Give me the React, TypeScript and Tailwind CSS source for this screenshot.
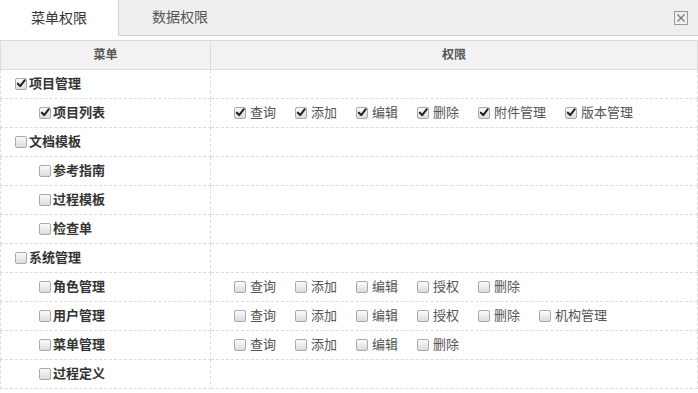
import React from 'react';

type Perm = { label: string; checked: boolean };
type Row = { label: string; level: 1 | 2; checked: boolean; perms: Perm[] };

const p = (labels: string[], checked: boolean): Perm[] => labels.map((label) => ({ label, checked }));

const rows: Row[] = [
  { label: '项目管理', level: 1, checked: true, perms: [] },
  { label: '项目列表', level: 2, checked: true, perms: p(['查询', '添加', '编辑', '删除', '附件管理', '版本管理'], true) },
  { label: '文档模板', level: 1, checked: false, perms: [] },
  { label: '参考指南', level: 2, checked: false, perms: [] },
  { label: '过程模板', level: 2, checked: false, perms: [] },
  { label: '检查单', level: 2, checked: false, perms: [] },
  { label: '系统管理', level: 1, checked: false, perms: [] },
  { label: '角色管理', level: 2, checked: false, perms: p(['查询', '添加', '编辑', '授权', '删除'], false) },
  { label: '用户管理', level: 2, checked: false, perms: p(['查询', '添加', '编辑', '授权', '删除', '机构管理'], false) },
  { label: '菜单管理', level: 2, checked: false, perms: p(['查询', '添加', '编辑', '删除'], false) },
  { label: '过程定义', level: 2, checked: false, perms: [] },
];

function Box({ checked }: { checked: boolean }) {
  return (
    <span className="relative inline-block h-[12px] w-[12px] shrink-0 rounded-[2px] border border-[#a9a9a9] bg-gradient-to-b from-[#fbfbfb] to-[#dcdcdc]">
      {checked && (
        <svg viewBox="0 0 12 12" className="absolute left-[0px] top-[-1px] h-[11px] w-[11px]">
          <path d="M2 6.2 L4.6 8.8 L9.6 2.4" fill="none" stroke="#222" strokeWidth="2.2" strokeLinecap="round" strokeLinejoin="round" />
        </svg>
      )}
    </span>
  );
}

export default function App() {
  return (
    <div className="h-[393px] w-[698px] overflow-hidden bg-white text-[13px] [font-family:'Liberation_Sans','Noto_Sans_CJK_SC',sans-serif]">
      {/* tabs */}
      <div className="relative flex h-[36px] border-b border-[#cfcfcf] bg-[#efefef]">
        <div className="flex h-[36px] w-[119px] items-center justify-center border-r border-[#cfcfcf] bg-white text-[14px] text-[#333]">
          菜单权限
        </div>
        <div className="flex h-[35px] w-[122px] items-center justify-center text-[14px] text-[#555]">数据权限</div>
        <div className="ml-auto mr-[10px] flex items-center">
          <svg viewBox="0 0 14 14" className="h-[14px] w-[14px]">
            <rect x="0.5" y="0.5" width="13" height="13" fill="none" stroke="#9a9a9a" />
            <path d="M3.5 3.5 L10.5 10.5 M10.5 3.5 L3.5 10.5" stroke="#777" strokeWidth="1.2" />
          </svg>
        </div>
      </div>

      <div className="pt-[4px]">
        <table className="w-full border-collapse">
          <thead>
            <tr className="h-[29px] bg-[#f2f2f2] text-[12px] font-bold text-[#555]">
              <th className="w-[210px] border-y border-l border-r border-[#dcdcdc] font-bold">菜单</th>
              <th className="border-y border-r border-[#dcdcdc] font-bold">权限</th>
            </tr>
          </thead>
          <tbody>
            {rows.map((r, i) => (
              <tr key={i} className="h-[29px]">
                <td className="border-b border-l border-r border-dashed border-[#dcdcdc] p-0">
                  <div className={`flex items-center gap-[2px] font-bold text-[#333] ${r.level === 1 ? 'pl-[14px]' : 'pl-[38px]'}`}>
                    <Box checked={r.checked} />
                    <span>{r.label}</span>
                  </div>
                </td>
                <td className="border-b border-r border-dashed border-[#dcdcdc] p-0">
                  <div className="flex items-center gap-[19px] pl-[23px] text-[#555]">
                    {r.perms.map((pm, j) => (
                      <label key={j} className="flex items-center gap-[4px]">
                        <Box checked={pm.checked} />
                        <span>{pm.label}</span>
                      </label>
                    ))}
                  </div>
                </td>
              </tr>
            ))}
          </tbody>
        </table>
      </div>
    </div>
  );
}
